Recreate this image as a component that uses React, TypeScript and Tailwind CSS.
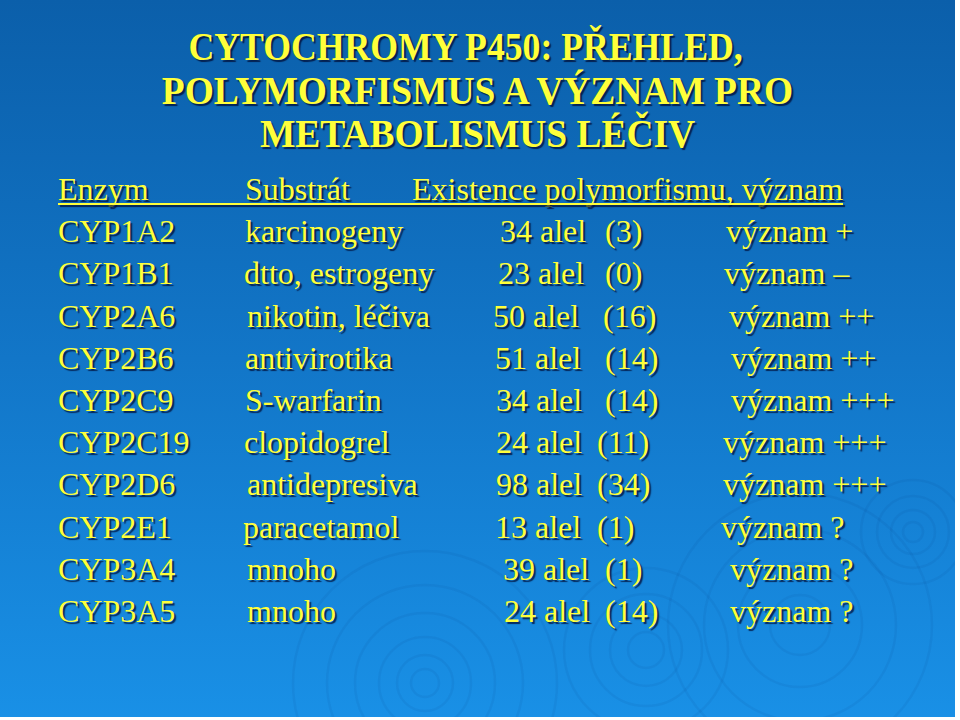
const rows = [
  { enz: 'CYP1A2', sub: 'karcinogeny', subPad: 'pl-[2px]', num: '34 alel', numPad: 'pl-[7px]', numW: 'w-[105px]', par: '(3)', vyz: 'význam +', vyzPad: 'pl-[6px]' },
  { enz: 'CYP1B1', sub: 'dtto, estrogeny', subPad: 'pl-[1px]', num: '23 alel', numPad: 'pl-[5px]', numW: 'w-[107px]', par: '(0)', vyz: 'význam –', vyzPad: 'pl-[4px]' },
  { enz: 'CYP2A6', sub: 'nikotin, léčiva', subPad: 'pl-[4px]', num: '50 alel', numPad: 'pl-[0px]', numW: 'w-[110px]', par: '(16)', vyz: 'význam ++', vyzPad: 'pl-[9px]' },
  { enz: 'CYP2B6', sub: 'antivirotika', subPad: 'pl-[2px]', num: '51 alel', numPad: 'pl-[2px]', numW: 'w-[110px]', par: '(14)', vyz: 'význam ++', vyzPad: 'pl-[11px]' },
  { enz: 'CYP2C9', sub: 'S-warfarin', subPad: 'pl-[2px]', num: '34 alel', numPad: 'pl-[3px]', numW: 'w-[109px]', par: '(14)', vyz: 'význam +++', vyzPad: 'pl-[11px]' },
  { enz: 'CYP2C19', sub: 'clopidogrel', subPad: 'pl-[1px]', num: '24 alel', numPad: 'pl-[3px]', numW: 'w-[101px]', par: '(11)', vyz: 'význam +++', vyzPad: 'pl-[3px]' },
  { enz: 'CYP2D6', sub: 'antidepresiva', subPad: 'pl-[4px]', num: '98 alel', numPad: 'pl-[3px]', numW: 'w-[101px]', par: '(34)', vyz: 'význam +++', vyzPad: 'pl-[3px]' },
  { enz: 'CYP2E1', sub: 'paracetamol', subPad: 'pl-[0px]', num: '13 alel', numPad: 'pl-[2px]', numW: 'w-[102px]', par: '(1)', vyz: 'význam ?', vyzPad: 'pl-[1px]' },
  { enz: 'CYP3A4', sub: 'mnoho', subPad: 'pl-[4px]', num: '39 alel', numPad: 'pl-[10px]', numW: 'w-[102px]', par: '(1)', vyz: 'význam ?', vyzPad: 'pl-[10px]' },
  { enz: 'CYP3A5', sub: 'mnoho', subPad: 'pl-[4px]', num: '24 alel', numPad: 'pl-[11px]', numW: 'w-[101px]', par: '(14)', vyz: 'význam ?', vyzPad: 'pl-[10px]' },
]

const ripples = [
  { cx: 425, cy: 683, r: [14, 28, 46, 70, 98, 132] },
  { cx: 646, cy: 650, r: [18, 36, 56, 82] },
  { cx: 800, cy: 625, r: [30, 62, 96, 132] },
  { cx: 913, cy: 532, r: [10, 22, 36, 52] },
]

function Ripples() {
  return (
    <svg className="absolute inset-0" width="955" height="717" viewBox="0 0 955 717">
      {ripples.map((g, i) =>
        g.r.map((r, j) => (
          <circle key={`${i}-${j}`} cx={g.cx} cy={g.cy} r={r} fill="none" stroke="#00286e" strokeOpacity="0.06" strokeWidth="2.5" />
        ))
      )}
    </svg>
  )
}

export default function App() {
  return (
    <div className="w-[960px] h-[720px] bg-white">
      <div className="relative w-[955px] h-[717px] overflow-hidden bg-gradient-to-b from-[#0b5faa] via-[#1276c8] to-[#1990e6]">
        <Ripples />
        <div className="relative text-[#ffff3a]">
          <div className="pt-[25px] text-[39px] leading-[43.5px] font-bold text-center font-['Liberation_Serif'] [text-shadow:2px_2px_1px_#000a32c0]">
            <div className="scale-x-[0.915] pr-[26px]">CYTOCHROMY P450: PŘEHLED,</div>
            <div className="scale-x-[0.96]">POLYMORFISMUS A VÝZNAM PRO</div>
            <div className="scale-x-[0.96]">METABOLISMUS LÉČIV</div>
          </div>

          <div className="mt-[12.5px] pl-[58px] text-[32px] font-['Liberation_Serif'] [text-shadow:2px_2px_1px_#000a32c0]">
            <div className="h-[42.2px] pt-[5.2px]">
              <div className="flex flex-col w-fit">
                <div className="flex h-[30px] leading-[32px]">
                  <div className="w-[187px]">Enzym</div>
                  <div className="w-[167px]">Substrát</div>
                  <div className="whitespace-nowrap">Existence polymorfismu, význam</div>
                </div>
                <div className="h-[2px] bg-[#ffff3a] shadow-[2px_2px_1px_#000a32c0]" />
              </div>
            </div>

            {rows.map(r => (
              <div key={r.enz} className="flex leading-[42.2px] whitespace-nowrap">
                <div className="w-[185px]">{r.enz}</div>
                <div className={`w-[250px] ${r.subPad}`}>{r.sub}</div>
                <div className={`w-[227px] flex ${r.numPad}`}>
                  <span className={r.numW}>{r.num}</span>
                  <span>{r.par}</span>
                </div>
                <div className={r.vyzPad}>{r.vyz}</div>
              </div>
            ))}
          </div>
        </div>
      </div>
    </div>
  )
}
